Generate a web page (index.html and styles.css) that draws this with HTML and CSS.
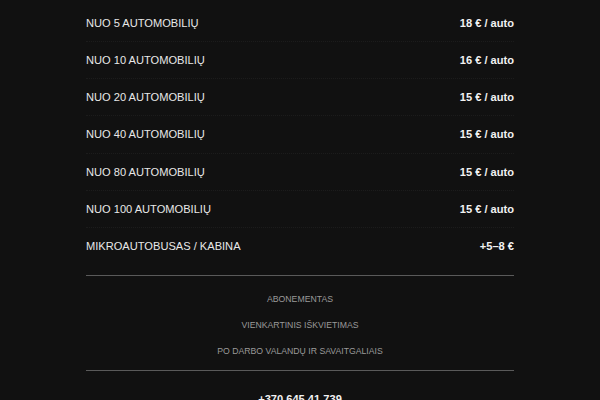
FILE: index.html
```html
<!DOCTYPE html>
<html lang="lt">
<head>
<meta charset="utf-8">
<link rel="stylesheet" href="styles.css">
</head>
<body>
<main class="wrap">
  <ul class="prices">
    <li class="row"><span class="label">NUO 5 AUTOMOBILIŲ</span><span class="price">18 € / auto</span></li>
    <li class="row"><span class="label">NUO 10 AUTOMOBILIŲ</span><span class="price">16 € / auto</span></li>
    <li class="row"><span class="label">NUO 20 AUTOMOBILIŲ</span><span class="price">15 € / auto</span></li>
    <li class="row"><span class="label">NUO 40 AUTOMOBILIŲ</span><span class="price">15 € / auto</span></li>
    <li class="row"><span class="label">NUO 80 AUTOMOBILIŲ</span><span class="price">15 € / auto</span></li>
    <li class="row"><span class="label">NUO 100 AUTOMOBILIŲ</span><span class="price">15 € / auto</span></li>
    <li class="row last"><span class="label">MIKROAUTOBUSAS / KABINA</span><span class="price">+5–8 €</span></li>
  </ul>
  <hr class="rule">
  <nav class="links">
    <a href="#">ABONEMENTAS</a>
    <a href="#">VIENKARTINIS IŠKVIETIMAS</a>
    <a href="#">PO DARBO VALANDŲ IR SAVAITGALIAIS</a>
  </nav>
  <hr class="rule">
  <div class="phone">+370 645 41 739</div>
</main>
</body>
</html>
```
FILE: styles.css
```css
html, body {
  margin: 0;
  padding: 0;
  background: #111111;
}
body {
  font-family: "Liberation Sans", Arial, sans-serif;
  color: #e6e6e6;
  overflow: hidden;
}
.wrap {
  width: 428px;
  margin: 0 0 0 86px;
  padding-top: 5px;
}
.prices {
  list-style: none;
  margin: 0;
  padding: 0;
}
.row {
  display: flex;
  justify-content: space-between;
  align-items: center;
  height: 36.15px;
  border-bottom: 1px dotted #1c1c1c;
  font-size: 11.1px;
}
.row.last {
  border-bottom: none;
}
.label {
  color: #e8e8e8;
}
.price {
  font-weight: bold;
  color: #f2f2f2;
}
.rule {
  border: 0;
  border-top: 1px solid #5a5a5a;
  margin: 11px 0 0 0;
  height: 0;
}
.links {
  display: flex;
  flex-direction: column;
  align-items: center;
  padding: 10px 0 6px;
}
.links a {
  color: #9a9a9a;
  text-decoration: none;
  font-size: 8.7px;
  line-height: 26px;
}
.links + .rule {
  margin-top: 0;
}
.phone {
  text-align: center;
  font-weight: bold;
  font-size: 11.1px;
  color: #f2f2f2;
  padding-top: 22px;
}
```
